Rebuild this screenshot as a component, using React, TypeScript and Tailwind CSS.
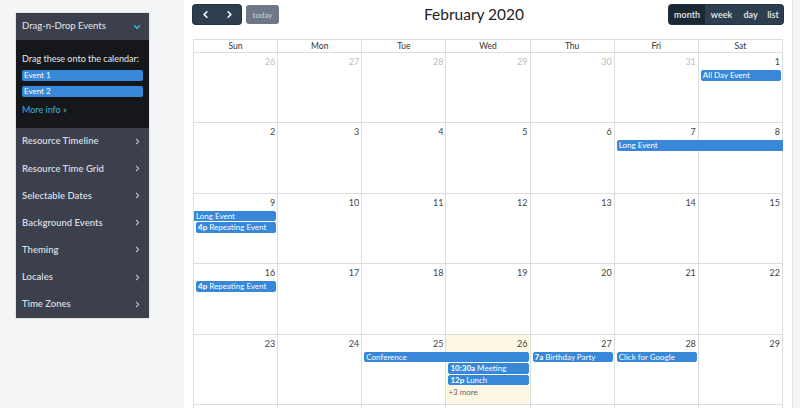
import React from 'react';
import { ChevronLeft, ChevronRight, ChevronDown } from 'lucide-react';

type Ev = {
  col: number;
  span: number;
  row: number;
  title: string;
  time?: string;
  flatLeft?: boolean;
  flatRight?: boolean;
};

type Week = { days: number[]; other: boolean[]; events: Ev[]; today?: number; hidden?: boolean };

const colStart = ['', 'col-start-1', 'col-start-2', 'col-start-3', 'col-start-4', 'col-start-5', 'col-start-6', 'col-start-7'];
const colSpan = ['', 'col-span-1', 'col-span-2', 'col-span-3'];
const rowStart = ['', 'row-start-1', 'row-start-2', 'row-start-3', 'row-start-4', 'row-start-5'];

const weeks: Week[] = [
  {
    days: [26, 27, 28, 29, 30, 31, 1],
    other: [true, true, true, true, true, true, false],
    events: [{ col: 7, span: 1, row: 2, title: 'All Day Event' }],
  },
  {
    days: [2, 3, 4, 5, 6, 7, 8],
    other: [false, false, false, false, false, false, false],
    events: [{ col: 6, span: 2, row: 2, title: 'Long Event', flatRight: true }],
  },
  {
    days: [9, 10, 11, 12, 13, 14, 15],
    other: [false, false, false, false, false, false, false],
    events: [
      { col: 1, span: 1, row: 2, title: 'Long Event', flatLeft: true },
      { col: 1, span: 1, row: 3, title: 'Repeating Event', time: '4p' },
    ],
  },
  {
    days: [16, 17, 18, 19, 20, 21, 22],
    other: [false, false, false, false, false, false, false],
    events: [{ col: 1, span: 1, row: 2, title: 'Repeating Event', time: '4p' }],
  },
  {
    days: [23, 24, 25, 26, 27, 28, 29],
    other: [false, false, false, false, false, false, false],
    today: 3,
    events: [
      { col: 3, span: 2, row: 2, title: 'Conference' },
      { col: 5, span: 1, row: 2, title: 'Birthday Party', time: '7a' },
      { col: 6, span: 1, row: 2, title: 'Click for Google' },
      { col: 4, span: 1, row: 3, title: 'Meeting', time: '10:30a' },
      { col: 4, span: 1, row: 4, title: 'Lunch', time: '12p' },
    ],
  },
  // first week of march, only its top edge shows in the window
  {
    days: [1, 2, 3, 4, 5, 6, 7],
    other: [true, true, true, true, true, true, true],
    events: [],
    hidden: true,
  },
];

const menu = ['Resource Timeline', 'Resource Time Grid', 'Selectable Dates', 'Background Events', 'Theming', 'Locales', 'Time Zones'];
const dayNames = ['Sun', 'Mon', 'Tue', 'Wed', 'Thu', 'Fri', 'Sat'];

const EventBar = ({ ev }: { ev: Ev }) => (
  <div
    className={`h-[10.5px] bg-[#3788d8] border border-[#3788d8] text-white text-[8px] leading-[9px] pl-[1px] truncate ${
      ev.flatLeft ? 'ml-0 rounded-r-[2px]' : 'ml-[2px]'
    } ${ev.flatRight ? 'mr-0 rounded-l-[2px]' : 'mr-[2px]'} ${!ev.flatLeft && !ev.flatRight ? 'rounded-[2px]' : ''}`}
  >
    {ev.time && <span className="font-bold mr-[2px]">{ev.time}</span>}
    {ev.title}
  </div>
);

const WeekRow = ({ week }: { week: Week }) => (
  <div className="grid grid-cols-7 grid-rows-[17px_11.5px_11.5px_11.5px_1fr] h-[70.4px] shrink-0">
    {week.days.map((d, i) => (
      <div
        key={'bg' + i}
        className={`${colStart[i + 1]} row-span-full row-start-1 border-r border-b border-[#dddddd] ${
          week.today === i ? 'bg-[#fcf8e3]' : ''
        }`}
      />
    ))}
    {!week.hidden &&
      week.days.map((d, i) => (
        <div
          key={'n' + i}
          className={`${colStart[i + 1]} row-start-1 z-10 text-right pr-[3px] pt-[3px] text-[9px] leading-[12px] ${
            week.other[i] ? 'text-[#bdbdbd]' : 'text-[#444]'
          }`}
        >
          {d}
        </div>
      ))}
    {week.events.map((ev, i) => (
      <div key={'e' + i} className={`${colStart[ev.col]} ${colSpan[ev.span]} ${rowStart[ev.row]} z-10`}>
        <EventBar ev={ev} />
      </div>
    ))}
    {week.today !== undefined && (
      <div className="col-start-4 row-start-5 z-10 text-[8px] leading-[10px] text-[#666] pl-[2px] pt-[1px]">+3 more</div>
    )}
  </div>
);

export default function App() {
  return (
    <div className="flex w-[800px] h-[408px] overflow-hidden font-['Lato','Noto_Sans',sans-serif] bg-white">
      <aside className="w-[184px] shrink-0 bg-[#f4f5f7] pt-[13px] pl-[16px]">
        <div className="w-[133px] bg-[#3b404c] shadow-[0_0_2px_rgba(0,0,0,0.2)]">
          <div className="h-[27px] flex items-center justify-between pl-[6px] pr-[7px] text-[9.5px] text-[#e3e6ea]">
            <span>Drag-n-Drop Events</span>
            <ChevronDown className="w-[10px] h-[10px] text-[#3ec0ec]" strokeWidth={3} />
          </div>
          <div className="h-[88px] bg-[#15171b] px-[6px] pt-[13px]">
            <div className="text-[9px] leading-[12px] text-[#e6e8eb]">Drag these onto the calendar:</div>
            <div className="mt-[5px] h-[11px] bg-[#3788d8] rounded-[2px] text-[8px] leading-[11px] text-white pl-[2px]">Event 1</div>
            <div className="mt-[5px] h-[11px] bg-[#3788d8] rounded-[2px] text-[8px] leading-[11px] text-white pl-[2px]">Event 2</div>
            <div className="mt-[7px] text-[9px] leading-[12px] text-[#3fb2d6]">More info »</div>
          </div>
          {menu.map((m) => (
            <div key={m} className="h-[27.1px] flex items-center justify-between pl-[6px] pr-[7px] text-[9.5px] font-semibold text-[#d9dce1]">
              <span>{m}</span>
              <ChevronRight className="w-[9px] h-[9px] text-[#b8bcc4]" strokeWidth={3} />
            </div>
          ))}
        </div>
      </aside>

      <main className="flex-1 flex flex-col px-[9px] pt-[5px] min-w-0">
        <div className="flex items-center justify-between h-[19px]">
          <div className="flex items-center gap-[5px]">
            <div className="flex h-[19px] w-[48px] rounded-[3px] bg-[#2c3e50] shadow-[0_0_0_1px_#243342]">
              <div className="flex-1 flex items-center justify-center">
                <ChevronLeft className="w-[11px] h-[11px] text-white" strokeWidth={3.5} />
              </div>
              <div className="flex-1 flex items-center justify-center">
                <ChevronRight className="w-[11px] h-[11px] text-white" strokeWidth={3.5} />
              </div>
            </div>
            <div className="h-[19px] w-[33px] rounded-[3px] bg-[#6d7886] text-[8px] text-[#cfd4da] flex items-center justify-center">today</div>
          </div>
          <div className="text-[15.5px] text-[#222] leading-[19px]">February 2020</div>
          <div className="flex h-[19px] w-[114px] rounded-[3px] overflow-hidden bg-[#2c3e50] text-[9px] font-semibold text-[#e8ebee] shadow-[0_0_0_1px_#243342]">
            <div className="w-[36px] bg-[#1b2733] flex items-center justify-center">month</div>
            <div className="w-[33px] flex items-center justify-center">week</div>
            <div className="w-[25px] flex items-center justify-center">day</div>
            <div className="w-[20px] flex items-center justify-center">list</div>
          </div>
        </div>

        <div className="mt-[15px] border-t border-l border-[#dddddd] flex flex-col">
          <div className="grid grid-cols-7 h-[13px] shrink-0">
            {dayNames.map((d) => (
              <div key={d} className="border-r border-b border-[#dddddd] text-center text-[8.5px] leading-[12px] text-[#333]">
                {d}
              </div>
            ))}
          </div>
          {weeks.map((w, i) => (
            <WeekRow key={i} week={w} />
          ))}
        </div>
      </main>

      <div className="w-[8px] shrink-0 bg-[#f4f5f7] border-l border-[#e4e6ea]" />
    </div>
  );
}
